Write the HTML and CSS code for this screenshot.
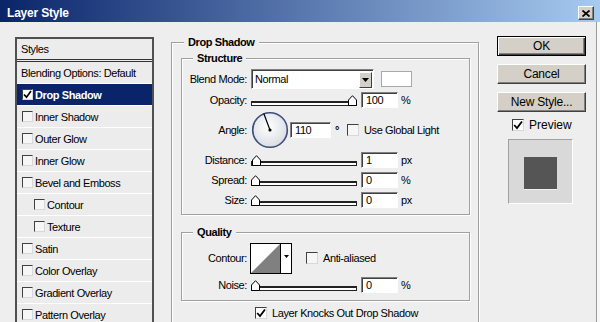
FILE: index.html
```html
<!DOCTYPE html>
<html lang="en">
<head>
	<meta charset="UTF-8">
	<title>Layer Style</title>
	<link rel="stylesheet" href="styles.css">
</head>
<body>
	<div class="window">
		<div class="titlebar">
			<span class="title">Layer Style</span>
			<span class="close">
				<svg width="8" height="7" viewBox="0 0 8 7"><path d="M0.5 0.5 L7.5 6.5 M7.5 0.5 L0.5 6.5" stroke="#000" stroke-width="1.7"/></svg>
			</span>
		</div>
		<div class="dialog">
			<!-- left: list of effects -->
			<div class="styles-list">
				<div class="list-head">Styles</div>
				<div class="list-row">Blending Options: Default</div>
				<div class="list-row selected"><span class="check on"><svg width="9" height="9" viewBox="0 0 9 9"><path d="M1 4.5 L3.5 7.2 L8 1" fill="none" stroke="#000" stroke-width="1.7"/></svg></span>Drop Shadow</div>
				<div class="list-row"><span class="check"></span>Inner Shadow</div>
				<div class="list-row"><span class="check"></span>Outer Glow</div>
				<div class="list-row"><span class="check"></span>Inner Glow</div>
				<div class="list-row"><span class="check"></span>Bevel and Emboss</div>
				<div class="list-row sub"><span class="check"></span>Contour</div>
				<div class="list-row sub"><span class="check"></span>Texture</div>
				<div class="list-row"><span class="check"></span>Satin</div>
				<div class="list-row"><span class="check"></span>Color Overlay</div>
				<div class="list-row"><span class="check"></span>Gradient Overlay</div>
				<div class="list-row"><span class="check"></span>Pattern Overlay</div>
			</div>

			<!-- middle: drop shadow settings -->
			<div class="main">
				<div class="group outer">
					<div class="group-title">Drop Shadow</div>

					<div class="group structure">
						<div class="group-title">Structure</div>
						<div class="row blend-row">
							<span class="lbl">Blend Mode:</span>
							<div class="select"><span>Normal</span><span class="drop-btn"><svg width="7" height="4" viewBox="0 0 7 4"><path d="M0 0 H7 L3.5 4 Z" fill="#000"/></svg></span></div>
							<div class="swatch"></div>
						</div>
						<div class="row opacity-row">
							<span class="lbl">Opacity:</span>
							<div class="slider"><div class="track"></div><span class="thumb" style="left:97px"><svg width="9" height="11" viewBox="0 0 9 11"><path d="M0.5 10.5 V5 L4.5 0.7 L8.5 5 V10.5 Z" fill="#fff" stroke="#000"/></svg></span></div>
							<div class="field">100</div>
							<span class="unit">%</span>
						</div>
						<div class="row angle-row">
							<span class="lbl">Angle:</span>
							<svg class="dial" width="38" height="38" viewBox="0 0 38 38">
								<defs>
									<radialGradient id="dialfill" cx="0.45" cy="0.4" r="0.6">
										<stop offset="0" stop-color="#ffffff"/>
										<stop offset="1" stop-color="#dadde3"/>
									</radialGradient>
								</defs>
								<circle cx="19" cy="19" r="17.3" fill="url(#dialfill)" stroke="#3e4f7a" stroke-width="1.6"/>
								<path d="M19 19 L12.8 2.5" stroke="#000" stroke-width="1.2"/>
								<circle cx="19" cy="19" r="1.6" fill="#000"/>
							</svg>
							<div class="field wide">110</div>
							<span class="deg">°</span>
							<span class="check big gl"></span>
							<span>Use Global Light</span>
						</div>
						<div class="row">
							<span class="lbl">Distance:</span>
							<div class="slider"><div class="track"></div><span class="thumb" style="left:1px"><svg width="9" height="11" viewBox="0 0 9 11"><path d="M0.5 10.5 V5 L4.5 0.7 L8.5 5 V10.5 Z" fill="#fff" stroke="#000"/></svg></span></div>
							<div class="field">1</div>
							<span class="unit">px</span>
						</div>
						<div class="row">
							<span class="lbl">Spread:</span>
							<div class="slider"><div class="track"></div><span class="thumb" style="left:0px"><svg width="9" height="11" viewBox="0 0 9 11"><path d="M0.5 10.5 V5 L4.5 0.7 L8.5 5 V10.5 Z" fill="#fff" stroke="#000"/></svg></span></div>
							<div class="field">0</div>
							<span class="unit">%</span>
						</div>
						<div class="row">
							<span class="lbl">Size:</span>
							<div class="slider"><div class="track"></div><span class="thumb" style="left:0px"><svg width="9" height="11" viewBox="0 0 9 11"><path d="M0.5 10.5 V5 L4.5 0.7 L8.5 5 V10.5 Z" fill="#fff" stroke="#000"/></svg></span></div>
							<div class="field">0</div>
							<span class="unit">px</span>
						</div>
					</div>

					<div class="group quality">
						<div class="group-title">Quality</div>
						<div class="row contour-row">
							<span class="lbl">Contour:</span>
							<div class="contour">
								<svg width="29" height="29" viewBox="0 0 29 29"><rect width="29" height="29" fill="#fff"/><path d="M0 29 L29 0 V29 Z" fill="#808080"/></svg>
								<span class="contour-btn"><svg width="5" height="3" viewBox="0 0 5 3"><path d="M0 0 H5 L2.5 3 Z" fill="#000"/></svg></span>
							</div>
							<span class="check big aa"></span>
							<span>Anti-aliased</span>
						</div>
						<div class="row noise-row">
							<span class="lbl">Noise:</span>
							<div class="slider"><div class="track"></div><span class="thumb" style="left:0px"><svg width="9" height="11" viewBox="0 0 9 11"><path d="M0.5 10.5 V5 L4.5 0.7 L8.5 5 V10.5 Z" fill="#fff" stroke="#000"/></svg></span></div>
							<div class="field">0</div>
							<span class="unit">%</span>
						</div>
					</div>

					<div class="row knock-row">
						<span class="check big on"><svg width="10" height="10" viewBox="0 0 10 10"><path d="M1.2 5 L4 8 L9 1.5" fill="none" stroke="#000" stroke-width="1.8"/></svg></span>
						<span>Layer Knocks Out Drop Shadow</span>
					</div>
				</div>
			</div>

			<!-- right: buttons and preview -->
			<div class="side">
				<div class="btn default">OK</div>
				<div class="btn">Cancel</div>
				<div class="btn last">New Style...</div>
				<div class="preview-row">
					<span class="check big on"><svg width="10" height="10" viewBox="0 0 10 10"><path d="M1.2 5 L4 8 L9 1.5" fill="none" stroke="#000" stroke-width="1.8"/></svg></span>
					<span>Preview</span>
				</div>
				<div class="preview">
					<div class="preview-square"></div>
				</div>
			</div>
		</div>
	</div>
</body>
</html>
```

FILE: styles.css
```css
*{
	box-sizing: border-box;
}
body{
	margin: 0;
	font-family: "Liberation Sans", Arial, sans-serif;
	font-size: 11px;
	letter-spacing: -0.4px;
	color: #000;
	background: #eee;
}
.window{
	width: 600px;
	height: 322px;
	overflow: hidden;
	background: #eee;
}

/* title bar */
.titlebar{
	height: 22px;
	padding: 4px 6px 0 7px;
	display: flex;
	align-items: center;
	justify-content: space-between;
	background: linear-gradient(to right, #0a246a, #a6caf0);
}
.title{
	color: #fff;
	font-weight: bold;
	font-size: 12px;
	letter-spacing: -0.2px;
}
.close{
	width: 16px;
	height: 14px;
	display: flex;
	align-items: center;
	justify-content: center;
	background: #d4d0c8;
	border: 1px solid;
	border-color: #fff #404040 #404040 #fff;
	box-shadow: inset -1px -1px 0 #808080;
}

.dialog{
	display: flex;
	align-items: flex-start;
	height: 300px;
	padding-left: 15px;
	box-shadow: inset -3px 0 0 #f8f8f8, inset -4px 0 0 #9a9a9a;
}

/* styles list */
.styles-list{
	width: 139px;
	height: 290px;
	margin-top: 15px;
	flex: none;
	background: #ececec;
	border: 2px solid #505050;
	border-bottom: none;
}
.list-head{
	height: 23px;
	padding-left: 4px;
	display: flex;
	align-items: center;
	border-bottom: 3px double #333;
}
.list-row{
	height: 22px;
	padding-left: 4px;
	display: flex;
	align-items: center;
	border-bottom: 1px solid #fff;
}
.list-row.sub{
	padding-left: 16px;
}
.list-row.selected{
	background: #0a246a;
	color: #fff;
	font-weight: bold;
}
.check{
	width: 11px;
	height: 11px;
	margin: 0 2px 0 1px;
	flex: none;
	display: flex;
	align-items: center;
	justify-content: center;
	background: #f6f6f6;
	border: 1px solid;
	border-color: #404040 #d8d8d8 #d8d8d8 #404040;
}
.check.on{
	background: #fff;
}
.check.big{
	width: 12px;
	height: 12px;
	margin: 0 5px 0 0;
}

/* middle panel */
.main{
	width: 308px;
	margin: 20px 0 0 17px;
	flex: none;
}
.group{
	border: 1px solid #a0a0a0;
	box-shadow: 1px 1px 0 #fff, inset 1px 1px 0 #fff;
}
.group-title{
	display: table;
	margin: -8px 0 0 12px;
	padding: 0 4px;
	line-height: 14px;
	background: #eee;
	font-weight: bold;
}
.outer{
	height: 290px;
	border-bottom: none;
}
.structure{
	margin: 9px 8px 0 9px;
	padding-bottom: 4px;
}
.structure .group-title,
.quality .group-title{
	margin-left: 11px;
}
.quality{
	margin: 17px 8px 0 9px;
	padding-bottom: 5px;
}
.row{
	height: 20px;
	display: flex;
	align-items: center;
}
.lbl{
	width: 65px;
	margin-right: 4px;
	flex: none;
	text-align: right;
}
.blend-row{
	margin-top: 4px;
}
.opacity-row{
	margin-top: 1px;
}
.angle-row{
	height: 40px;
}

.select{
	width: 123px;
	height: 20px;
	padding: 0 1px 0 3px;
	display: flex;
	align-items: center;
	justify-content: space-between;
	background: #fff;
	border: 1px solid;
	border-color: #808080 #fff #fff #808080;
	box-shadow: inset 1px 1px 0 #404040;
}
.drop-btn{
	width: 13px;
	height: 16px;
	margin-top: 1px;
	display: flex;
	align-items: center;
	justify-content: center;
	background: #d4d0c8;
	border: 1px solid;
	border-color: #fff #404040 #404040 #fff;
}
.swatch{
	width: 31px;
	height: 16px;
	margin-left: 7px;
	background: #fff;
	border: 1px solid #a8a8a8;
}

.slider{
	position: relative;
	width: 106px;
	height: 11px;
	flex: none;
}
.track{
	height: 5px;
	margin-top: 6px;
	background: #fff;
	border: 1px solid #222;
	border-top-width: 2px;
}
.thumb{
	position: absolute;
	top: 0;
	width: 9px;
	height: 11px;
	display: block;
}
.thumb svg{
	display: block;
}
.field{
	width: 37px;
	height: 16px;
	margin-left: 4px;
	padding-left: 4px;
	display: flex;
	align-items: center;
	background: #fff;
	border: 1px solid;
	border-color: #808080 #fff #fff #808080;
	box-shadow: inset 1px 1px 0 #404040;
}
.field.wide{
	width: 41px;
	margin-left: 1px;
}
.unit{
	margin-left: 3px;
}
.dial{
	flex: none;
}
.deg{
	margin-left: 4px;
	font-weight: bold;
}
.check.gl{
	margin-left: 8px;
}

.contour-row{
	height: 32px;
	margin-top: 3px;
}
.contour{
	width: 42px;
	height: 31px;
	margin-left: -1px;
	display: flex;
	border: 1px solid #000;
}
.contour svg{
	display: block;
}
.contour-btn{
	flex: 1;
	padding-top: 11px;
	display: flex;
	justify-content: center;
	align-items: flex-start;
	background: #fff;
	border-left: 1px solid #000;
}
.check.aa{
	margin-left: 14px;
}
.noise-row{
	margin-top: 1px;
}
.knock-row{
	margin-top: 2px;
	padding-left: 83px;
}

/* right column */
.side{
	width: 89px;
	margin: 14px 0 0 18px;
	flex: none;
}
.btn{
	height: 20px;
	margin-bottom: 8px;
	display: flex;
	align-items: center;
	justify-content: center;
	font-size: 12px;
	letter-spacing: -0.2px;
	background: #d4d0c8;
	border: 1px solid;
	border-color: #fff #404040 #404040 #fff;
	box-shadow: inset -1px -1px 0 #808080;
}
.btn.default{
	border: 1px solid #000;
	box-shadow: inset 1px 1px 0 #fff, inset -1px -1px 0 #404040, inset -2px -2px 0 #808080;
}
.btn.last{
	margin-bottom: 3px;
}
.preview-row{
	height: 20px;
	padding-left: 15px;
	display: flex;
	align-items: center;
	font-size: 12px;
	letter-spacing: 0;
}
.preview{
	width: 65px;
	height: 65px;
	margin: 4px 0 0 11px;
	padding: 17px 0 0 15px;
	background: #d9d9d9;
	border: 1px solid;
	border-color: #a0a0a0 #fff #fff #a0a0a0;
}
.preview-square{
	width: 33px;
	height: 32px;
	background: #555;
	box-shadow: 0 1px 0 #f0f0f0;
}
```
